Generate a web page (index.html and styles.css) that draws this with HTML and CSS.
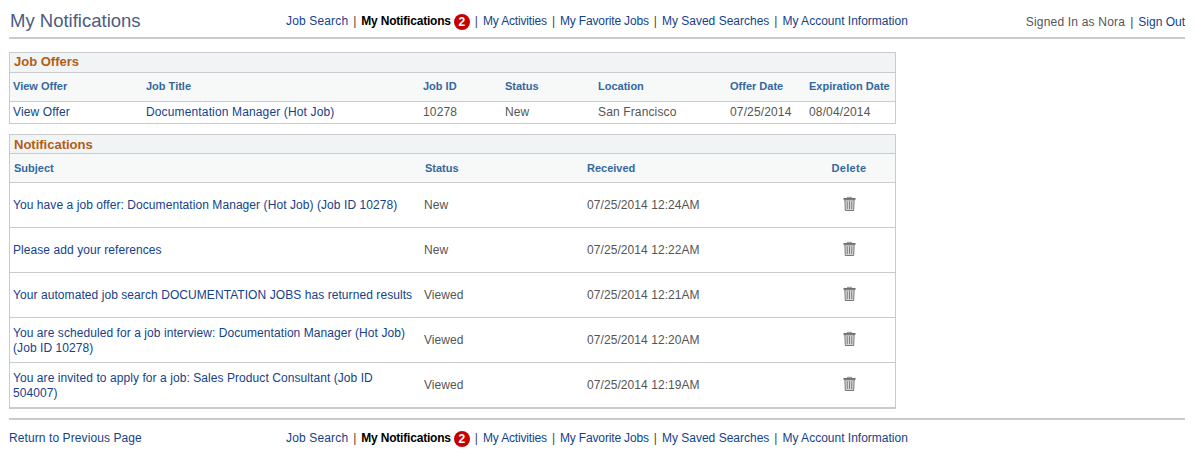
FILE: index.html
```html
<!DOCTYPE html>
<html>
<head lang="en">
    <meta charset="UTF-8">
    <title>My Notifications</title>
    <link rel="stylesheet" href="styles.css">
</head>
<body>

<!--top bar-->
<div class="topbar">
    <h1 class="page-title">My Notifications</h1>
    <div class="nav">
        <a class="wide" href="#">Job Search</a><span class="sep">|</span>
        <b>My Notifications</b><span class="badge">2</span><span class="sep">|</span>
        <a class="tight" href="#">My Activities</a><span class="sep">|</span>
        <a class="tight" href="#">My Favorite Jobs</a><span class="sep">|</span>
        <a href="#">My Saved Searches</a><span class="sep">|</span>
        <a href="#">My Account Information</a>
    </div>
    <div class="signed"><span class="who">Signed In as Nora</span><span class="sep">|</span><a href="#">Sign Out</a></div>
</div>

<!--job offers-->
<div class="box offers">
    <div class="box-title">Job Offers</div>
    <table>
        <tr class="head">
            <th class="o1">View Offer</th>
            <th class="o2">Job Title</th>
            <th class="o3">Job ID</th>
            <th class="o4">Status</th>
            <th class="o5">Location</th>
            <th class="o6">Offer Date</th>
            <th class="o7">Expiration Date</th>
        </tr>
        <tr class="row-offer">
            <td><a href="#">View Offer</a></td>
            <td><a href="#">Documentation Manager (Hot Job)</a></td>
            <td>10278</td>
            <td>New</td>
            <td>San Francisco</td>
            <td>07/25/2014</td>
            <td>08/04/2014</td>
        </tr>
    </table>
</div>

<!--notifications-->
<div class="box notes">
    <div class="box-title">Notifications</div>
    <table>
        <tr class="head">
            <th class="n1">Subject</th>
            <th class="n2">Status</th>
            <th class="n3">Received</th>
            <th class="n4">Delete</th>
        </tr>
        <tr class="row-note">
            <td class="subject"><a href="#">You have a job offer: Documentation Manager (Hot Job) (Job ID 10278)</a></td>
            <td>New</td>
            <td>07/25/2014 12:24AM</td>
            <td class="del"><svg class="trash" viewBox="0 0 14 16"><use href="#trash"/></svg></td>
        </tr>
        <tr class="row-note">
            <td class="subject"><a href="#">Please add your references</a></td>
            <td>New</td>
            <td>07/25/2014 12:22AM</td>
            <td class="del"><svg class="trash" viewBox="0 0 14 16"><use href="#trash"/></svg></td>
        </tr>
        <tr class="row-note">
            <td class="subject"><a href="#">Your automated job search DOCUMENTATION JOBS has returned results</a></td>
            <td>Viewed</td>
            <td>07/25/2014 12:21AM</td>
            <td class="del"><svg class="trash" viewBox="0 0 14 16"><use href="#trash"/></svg></td>
        </tr>
        <tr class="row-note">
            <td class="subject two"><a href="#">You are scheduled for a job interview: Documentation Manager (Hot Job) (Job ID 10278)</a></td>
            <td>Viewed</td>
            <td>07/25/2014 12:20AM</td>
            <td class="del"><svg class="trash" viewBox="0 0 14 16"><use href="#trash"/></svg></td>
        </tr>
        <tr class="row-note last">
            <td class="subject two"><a href="#">You are invited to apply for a job: Sales Product Consultant (Job ID 504007)</a></td>
            <td>Viewed</td>
            <td>07/25/2014 12:19AM</td>
            <td class="del"><svg class="trash" viewBox="0 0 14 16"><use href="#trash"/></svg></td>
        </tr>
    </table>
</div>

<!--bottom bar-->
<div class="bottombar">
    <a class="back" href="#">Return to Previous Page</a>
    <div class="nav">
        <a class="wide" href="#">Job Search</a><span class="sep">|</span>
        <b>My Notifications</b><span class="badge">2</span><span class="sep">|</span>
        <a class="tight" href="#">My Activities</a><span class="sep">|</span>
        <a class="tight" href="#">My Favorite Jobs</a><span class="sep">|</span>
        <a href="#">My Saved Searches</a><span class="sep">|</span>
        <a href="#">My Account Information</a>
    </div>
</div>

<svg class="defs" width="0" height="0">
    <symbol id="trash" viewBox="0 0 14 16">
        <path d="M5 1.5V.6h4v.9" fill="none" stroke="#777" stroke-width="1"/>
        <rect x="0.5" y="1.5" width="13" height="2" fill="#6e6e6e"/>
        <path d="M2 3.5h10l-.5 11.5h-9z" fill="#d9d9d9" stroke="#6e6e6e" stroke-width="1"/>
        <path d="M4.6 5v8.5M7 5v8.5M9.4 5v8.5" stroke="#777" stroke-width="1"/>
    </symbol>
</svg>

</body>
</html>
```

FILE: styles.css
```css
body {
    margin: 0;
    padding: 0 12px 0 9px;
    font: 12px/15px "Liberation Sans", Arial, sans-serif;
    color: #555;
    background: #fff;
}

a {
    color: #14428b;
    text-decoration: none;
}

.topbar {
    display: flex;
    height: 37px;
    border-bottom: 2px solid #cbcbcb;
}

.page-title {
    width: 277px;
    margin: 0;
    padding: 10px 0 0 1px;
    box-sizing: border-box;
    font: normal 18.5px/21px "Liberation Sans", Arial, sans-serif;
    color: #4d5b84;
}

.nav {
    display: flex;
    align-items: center;
    height: 15px;
    margin-top: 14px;
    white-space: pre;
}

.nav b {
    letter-spacing: -0.2px;
    color: #000;
}

.wide {
    letter-spacing: 0.15px;
}

.tight {
    letter-spacing: -0.16px;
}

.sep {
    margin: 0 5px;
    color: #444;
}

.badge {
    width: 16px;
    height: 16px;
    margin-left: 3px;
    border-radius: 50%;
    background: #c60000;
    color: #fff;
    font-weight: bold;
    line-height: 16px;
    text-align: center;
}

.signed {
    margin-top: 15px;
    margin-left: auto;
}

.who {
    letter-spacing: 0.2px;
}

/*tables*/
.box {
    width: 887px;
    border: 1px solid #cbcbcb;
    box-sizing: border-box;
}

.offers {
    margin-top: 13px;
}

.notes {
    margin-top: 10px;
    border-bottom-width: 2px;
}

.box-title {
    height: 20px;
    padding-left: 4px;
    background: #f1f4f5;
    border-bottom: 1px solid #cbcbcb;
    box-sizing: border-box;
    font-size: 13px;
    font-weight: bold;
    line-height: 18px;
    color: #b35c14;
}

.notes .box-title {
    height: 19px;
    line-height: 19px;
}

table {
    width: 100%;
    border-collapse: collapse;
    table-layout: fixed;
}

th {
    box-sizing: border-box;
    height: 28px;
    padding: 0 0 0 3px;
    font-size: 11px;
    font-weight: bold;
    text-align: left;
    color: #33689f;
    background: #f7f8f8;
    border-bottom: 1px solid #cbcbcb;
}

.notes th {
    height: 29px;
    padding: 1px 0 0 4px;
}

.notes th.n3 {
    padding-left: 3px;
}

td {
    padding: 0 0 0 3px;
    vertical-align: middle;
}

.row-offer td {
    height: 21px;
    letter-spacing: 0.14px;
}

.row-note td {
    height: 44px;
    border-bottom: 1px solid #cbcbcb;
    letter-spacing: 0.07px;
}

.row-note td.subject {
    padding-right: 5px;
}

.row-note td.two {
    height: 42px;
    padding-top: 2px;
}

.row-note.last td {
    border-bottom: 0;
}

.o1 { width: 133px; }
.o2 { width: 277px; }
.o3 { width: 82px; }
.o4 { width: 93px; }
.o5 { width: 132px; }
.o6 { width: 79px; }

.n1 { width: 411px; }
.n2 { width: 163px; }
.n3 { width: 231px; }

.notes th.n4 {
    padding: 1px 12px 0 0;
    text-align: center;
    letter-spacing: 0.3px;
}

.row-note td.del {
    padding: 0 12px 0 0;
}

.trash {
    display: block;
    width: 13px;
    height: 16px;
    margin: -3px auto 0;
}

.bottombar {
    display: flex;
    height: 37px;
    margin-top: 9px;
    border-top: 2px solid #cbcbcb;
}

.back {
    width: 277px;
    margin-top: 11px;
    letter-spacing: 0.09px;
}

.bottombar .nav {
    margin-top: 11px;
}

.defs {
    position: absolute;
}
```
